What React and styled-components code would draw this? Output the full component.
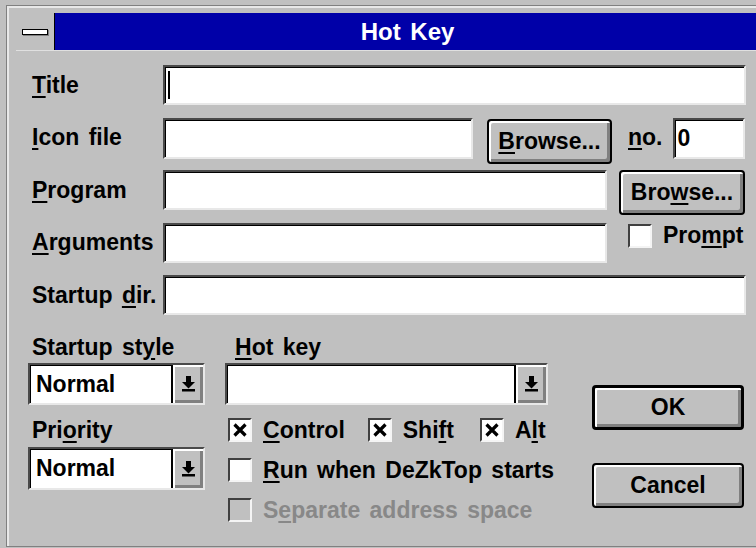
import React from 'react';
import styled, { createGlobalStyle } from 'styled-components';

const GlobalStyle = createGlobalStyle`
  html, body {
    margin: 0;
    padding: 0;
    background: #c0c0c0;
    overflow: hidden;
  }
  body {
    width: 756px;
    height: 548px;
    font-family: "Liberation Sans", Arial, sans-serif;
    font-weight: bold;
    font-size: 23px;
    word-spacing: 3px;
    color: #000;
  }
  u {
    text-decoration-thickness: 2px;
    text-underline-offset: 3px;
  }
`;

const Window = styled.div`
  box-sizing: border-box;
  margin: 5px 0 0 6px;
  width: 764px;
  height: 542px;
  border: 1px solid #808080;
  box-shadow: inset 2px 2px 0 #e8e8e8;
  padding: 7px 9px 0 9px;
  background: #c0c0c0;
  display: flex;
  flex-direction: column;
`;

const TitleBar = styled.div`
  display: flex;
  height: 37px;
  background: #0000a8;
  border-bottom: 1px solid #e0e0e0;
`;

const SysMenu = styled.div`
  width: 38px;
  background: #c0c0c0;
  border-right: 1px solid #000;
  display: flex;
  align-items: center;
  justify-content: center;
`;

const SysBar = styled.span`
  box-sizing: border-box;
  width: 26px;
  height: 6px;
  background: #fff;
  border: 1px solid #000;
  box-shadow: 1px 1px 0 #808080;
`;

const Caption = styled.div`
  flex: 1;
  display: flex;
  align-items: center;
  justify-content: center;
  color: #fff;
  font-size: 24px;
`;

const Body = styled.div`
  padding: 14px 0 0 12px;
`;

const Row = styled.div`
  display: flex;
  align-items: flex-start;
  height: 40px;
  margin-bottom: 12.5px;
`;

const RowLabel = styled.div`
  box-sizing: border-box;
  width: 135px;
  height: 40px;
  padding-left: 4px;
  display: flex;
  align-items: center;
  white-space: nowrap;
`;

const Edit = styled.div`
  box-sizing: border-box;
  width: ${p => p.$w}px;
  height: ${p => p.$h || 40}px;
  margin-left: ${p => p.$ml || 0}px;
  background: #fff;
  border: 2px solid;
  border-color: #4a4a4a #e8e8e8 #e8e8e8 #4a4a4a;
  box-shadow: inset 1px 1px 0 #000;
  display: flex;
  align-items: center;
  padding-left: 3px;
`;

const Caret = styled.span`
  width: 2px;
  height: 28px;
  background: #000;
`;

const Button = styled.div`
  box-sizing: border-box;
  width: ${p => p.$w}px;
  height: 45px;
  margin-left: ${p => p.$ml || 0}px;
  margin-top: ${p => p.$mt || 0}px;
  border: ${p => (p.$default ? 3 : 2)}px solid #000;
  border-radius: 4px;
  background: #c0c0c0;
  box-shadow: inset 2px 2px 0 #fff, inset -3px -3px 0 #808080;
  display: flex;
  align-items: center;
  justify-content: center;
  white-space: nowrap;
`;

const InlineLabel = styled.span`
  margin-left: ${p => p.$ml || 0}px;
  height: 40px;
  display: flex;
  align-items: center;
`;

const Check = styled.label`
  display: flex;
  align-items: center;
  gap: 11px;
  height: ${p => p.$h || 26}px;
  margin-left: ${p => p.$ml || 0}px;
  color: ${p => (p.$disabled ? '#888' : '#000')};
  white-space: nowrap;
`;

const Box = styled.span`
  box-sizing: border-box;
  width: 24px;
  height: 24px;
  background: ${p => (p.$disabled ? '#c0c0c0' : '#fff')};
  border: 2px solid;
  border-color: #404040 #f4f4f4 #f4f4f4 #404040;
  display: flex;
  align-items: center;
  justify-content: center;
`;

const Lower = styled.div`
  display: flex;
  margin-top: 19px;
`;

const Column = styled.div`
  display: flex;
  flex-direction: column;
  width: ${p => p.$w}px;
  margin-left: ${p => p.$ml || 0}px;
  padding-top: ${p => p.$pt || 0}px;
`;

const GroupLabel = styled.div`
  height: 26px;
  line-height: 26px;
  padding-left: ${p => p.$pl || 4}px;
  margin-top: ${p => p.$mt || 0}px;
  white-space: nowrap;
`;

const Combo = styled.div`
  box-sizing: border-box;
  display: flex;
  height: ${p => p.$h || 42}px;
  margin-top: ${p => p.$mt || 3}px;
  background: #fff;
  border: 2px solid;
  border-color: #4a4a4a #e8e8e8 #e8e8e8 #4a4a4a;
  box-shadow: inset 1px 1px 0 #000;
`;

const ComboText = styled.div`
  flex: 1;
  display: flex;
  align-items: center;
  padding-left: 6px;
`;

const DropButton = styled.div`
  box-sizing: border-box;
  width: 32px;
  background: #c0c0c0;
  border-left: 2px solid #000;
  box-shadow: inset 2px 2px 0 #fff, inset -3px -3px 0 #808080;
  display: flex;
  align-items: center;
  justify-content: center;
`;

const CheckRow = styled.div`
  display: flex;
  padding-left: 3px;
  margin-top: ${p => p.$mt || 14}px;
`;

const Cross = () => (
  <svg width="14" height="14" viewBox="0 0 14 14">
    <path d="M1.5 1.5 L12.5 12.5 M12.5 1.5 L1.5 12.5" stroke="#000" strokeWidth="3.2" />
  </svg>
);

const DownArrow = () => (
  <svg width="15" height="16" viewBox="0 0 15 16">
    <rect x="5" y="0" width="5" height="6" fill="#000" />
    <path d="M1 6 H14 L7.5 12.5 Z" fill="#000" />
    <rect x="1" y="13" width="13" height="2.5" fill="#000" />
  </svg>
);

const CheckBox = ({ checked, disabled, ml, children }) => (
  <Check $ml={ml} $disabled={disabled}>
    <Box $disabled={disabled}>{checked && <Cross />}</Box>
    <span>{children}</span>
  </Check>
);

const ComboBox = ({ value, h, mt }) => (
  <Combo $h={h} $mt={mt}>
    <ComboText>{value}</ComboText>
    <DropButton>
      <DownArrow />
    </DropButton>
  </Combo>
);

export default function App() {
  return (
    <>
      <GlobalStyle />
      <Window>
        <TitleBar>
          <SysMenu>
            <SysBar />
          </SysMenu>
          <Caption>Hot Key</Caption>
        </TitleBar>

        <Body>
          <Row>
            <RowLabel><span><u>T</u>itle</span></RowLabel>
            <Edit $w={583}><Caret /></Edit>
          </Row>
          <Row>
            <RowLabel><span><u>I</u>con file</span></RowLabel>
            <Edit $w={310} $h={41} />
            <Button $w={125} $ml={14} $mt={1}><span><u>B</u>rowse...</span></Button>
            <InlineLabel $ml={16}><span><u>n</u>o.</span></InlineLabel>
            <Edit $w={72} $h={41} $ml={10}>0</Edit>
          </Row>
          <Row>
            <RowLabel><span><u>P</u>rogram</span></RowLabel>
            <Edit $w={444} />
            <Button $w={126} $ml={12}><span>Bro<u>w</u>se...</span></Button>
          </Row>
          <Row>
            <RowLabel><span><u>A</u>rguments</span></RowLabel>
            <Edit $w={444} />
            <CheckBox ml={21}>
              <span>Pro<u>m</u>pt</span>
            </CheckBox>
          </Row>
          <Row>
            <RowLabel><span>Startup <u>d</u>ir.</span></RowLabel>
            <Edit $w={583} />
          </Row>

          <Lower>
            <Column $w={177}>
              <GroupLabel>Startup st<u>y</u>le</GroupLabel>
              <ComboBox value="Normal" />
              <GroupLabel $mt={12}>Pri<u>o</u>rity</GroupLabel>
              <ComboBox value="Normal" h={43} mt={4} />
            </Column>

            <Column $w={323} $ml={20}>
              <GroupLabel $pl={10}><u>H</u>ot key</GroupLabel>
              <ComboBox value="" />
              <CheckRow $mt={12}>
                <CheckBox checked><u>C</u>ontrol</CheckBox>
                <CheckBox checked ml={23}>Shi<u>f</u>t</CheckBox>
                <CheckBox checked ml={26}>A<u>l</u>t</CheckBox>
              </CheckRow>
              <CheckRow>
                <CheckBox><u>R</u>un when DeZkTop starts</CheckBox>
              </CheckRow>
              <CheckRow>
                <CheckBox disabled>S<u>e</u>parate address space</CheckBox>
              </CheckRow>
            </Column>

            <Column $w={152} $ml={44} $pt={51}>
              <Button $w={152} $default>OK</Button>
              <Button $w={152} $mt={33}>Cancel</Button>
            </Column>
          </Lower>
        </Body>
      </Window>
    </>
  );
}
